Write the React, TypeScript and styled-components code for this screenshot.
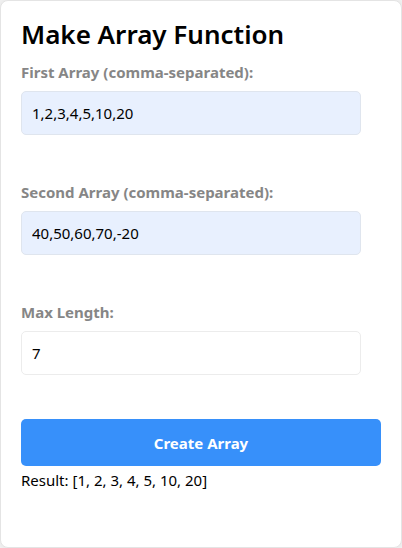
import React, {useState} from 'react';
import styled, {createGlobalStyle} from 'styled-components';

const GlobalStyle = createGlobalStyle`
  html, body {
    margin: 0;
    padding: 0;
    background: #f2f2f2;
  }
  body {
    font-family: 'Noto Sans', 'Open Sans', sans-serif;
  }
`

const makeArray = (a: string, b: string, max: number) => {
    const parse = (s: string) => s.split(',').map(v => v.trim()).filter(v => v !== '').map(Number)
    return [...parse(a), ...parse(b)].slice(0, max)
}

const App = () => {
    const [first, setFirst] = useState('1,2,3,4,5,10,20')
    const [second, setSecond] = useState('40,50,60,70,-20')
    const [max, setMax] = useState('7')
    const [result, setResult] = useState<number[]>(makeArray('1,2,3,4,5,10,20', '40,50,60,70,-20', 7))

    const handleClick = () => setResult(makeArray(first, second, Number(max) || 0))

    return (
        <>
            <GlobalStyle/>
            <Card>
                <Title>Make Array Function</Title>
                <Field>
                    <Label>First Array (comma-separated):</Label>
                    <Input $filled value={first} onChange={e => setFirst(e.currentTarget.value)}/>
                </Field>
                <Field>
                    <Label>Second Array (comma-separated):</Label>
                    <Input $filled value={second} onChange={e => setSecond(e.currentTarget.value)}/>
                </Field>
                <Field>
                    <Label>Max Length:</Label>
                    <Input value={max} onChange={e => setMax(e.currentTarget.value)}/>
                </Field>
                <Button onClick={handleClick}>Create Array</Button>
                <Result>Result: [{result.join(', ')}]</Result>
            </Card>
        </>
    );
};

export default App;


const Card = styled.div`
  box-sizing: border-box;
  width: 402px;
  height: 548px;
  background: #fff;
  border: 1px solid #e4e4e4;
  border-radius: 8px;
  box-shadow: 0 0 6px rgba(0, 0, 0, 0.06);
  padding: 17px 20px 20px;
  color: #000;
`
const Title = styled.h1`
  margin: 0 0 12px;
  font-size: 26px;
  font-weight: 600;
  line-height: 32px;
`
const Field = styled.div`
  & + & {
    margin-top: 47px;
  }
`
const Label = styled.label`
  display: block;
  font-size: 15px;
  font-weight: 700;
  color: #868686;
  line-height: 20px;
  margin-bottom: 9px;
`
const Input = styled.input<{ $filled?: boolean }>`
  box-sizing: border-box;
  display: block;
  width: 340px;
  height: 44px;
  padding: 0 10px;
  font-size: 15px;
  font-family: inherit;
  color: #000;
  background: ${p => p.$filled ? '#e8f0fe' : '#fff'};
  border: 1px solid ${p => p.$filled ? '#dfe5ee' : '#ececec'};
  border-radius: 5px;
  outline: none;
`
const Button = styled.button`
  display: block;
  width: 360px;
  height: 47px;
  margin-top: 44px;
  border: none;
  border-radius: 5px;
  background: #3790fa;
  color: #fff;
  font-size: 15px;
  font-weight: 700;
  font-family: inherit;
  cursor: pointer;
`
const Result = styled.div`
  font-size: 15px;
  line-height: 20px;
  margin-top: 4px;
`
